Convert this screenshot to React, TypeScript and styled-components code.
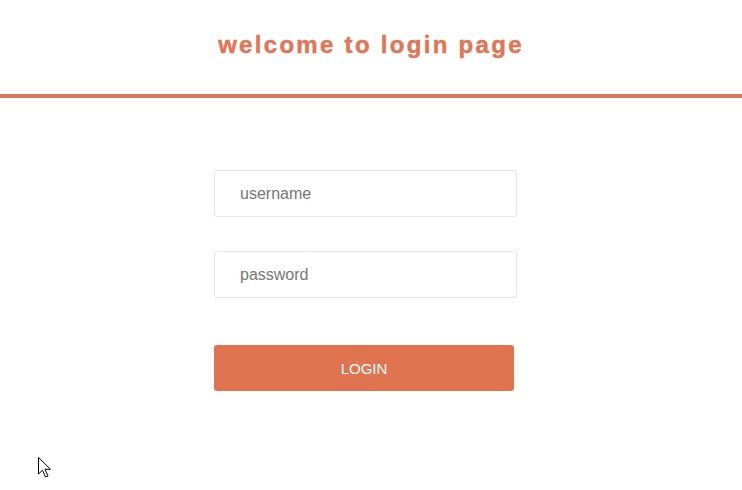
import styled, { createGlobalStyle } from 'styled-components'

const GlobalStyle = createGlobalStyle`
  body {
    margin: 0;
    background: #fff;
    font-family: "Liberation Sans", Arial, sans-serif;
  }
`

const Page = styled.div`
  position: relative;
  width: 742px;
  height: 490px;
  overflow: hidden;
`

const Header = styled.header`
  height: 94px;
  display: flex;
  align-items: center;
  justify-content: center;
  border-bottom: 4px solid #df7656;
  box-sizing: content-box;
`

const Title = styled.h1`
  margin: 0 0 4px;
  font-size: 24px;
  font-weight: 700;
  letter-spacing: 2.3px;
  color: #df7656;
  -webkit-text-stroke: 0.5px #df7656;
`

const Form = styled.form`
  display: flex;
  flex-direction: column;
  width: 303px;
  margin: 72px 0 0 214px;
`

const Input = styled.input<{ last?: boolean }>`
  height: 47px;
  box-sizing: border-box;
  border: 1px solid #e6e6e6;
  border-radius: 3px;
  padding: 0 0 0 25px;
  margin-bottom: ${p => (p.last ? 47 : 34)}px;
  font-family: "Liberation Sans", Arial, sans-serif;
  font-size: 16px;
  color: #333;
  outline: none;
  &::placeholder {
    color: #777;
  }
`

const Button = styled.button`
  width: 300px;
  height: 46px;
  border: none;
  border-radius: 3px;
  background: #e07350;
  color: #fff;
  font-family: "Liberation Sans", Arial, sans-serif;
  font-size: 15px;
  cursor: pointer;
`

const Cursor = styled.svg`
  position: absolute;
  left: 38px;
  top: 457px;
`

export default function App() {
  return (
    <Page>
      <GlobalStyle />
      <Header>
        <Title>welcome to login page</Title>
      </Header>
      <Form onSubmit={e => e.preventDefault()}>
        <Input placeholder="username" />
        <Input type="password" placeholder="password" last />
        <Button type="submit">LOGIN</Button>
      </Form>
      <Cursor width="14" height="24" viewBox="0 0 14 24">
        <path d="M0.5 0.5 L0.5 17 L4.5 13.2 L7.5 20 L10 19 L7 12.3 L12.5 12.3 Z" fill="#fff" stroke="#000" strokeWidth="1" />
      </Cursor>
    </Page>
  )
}
